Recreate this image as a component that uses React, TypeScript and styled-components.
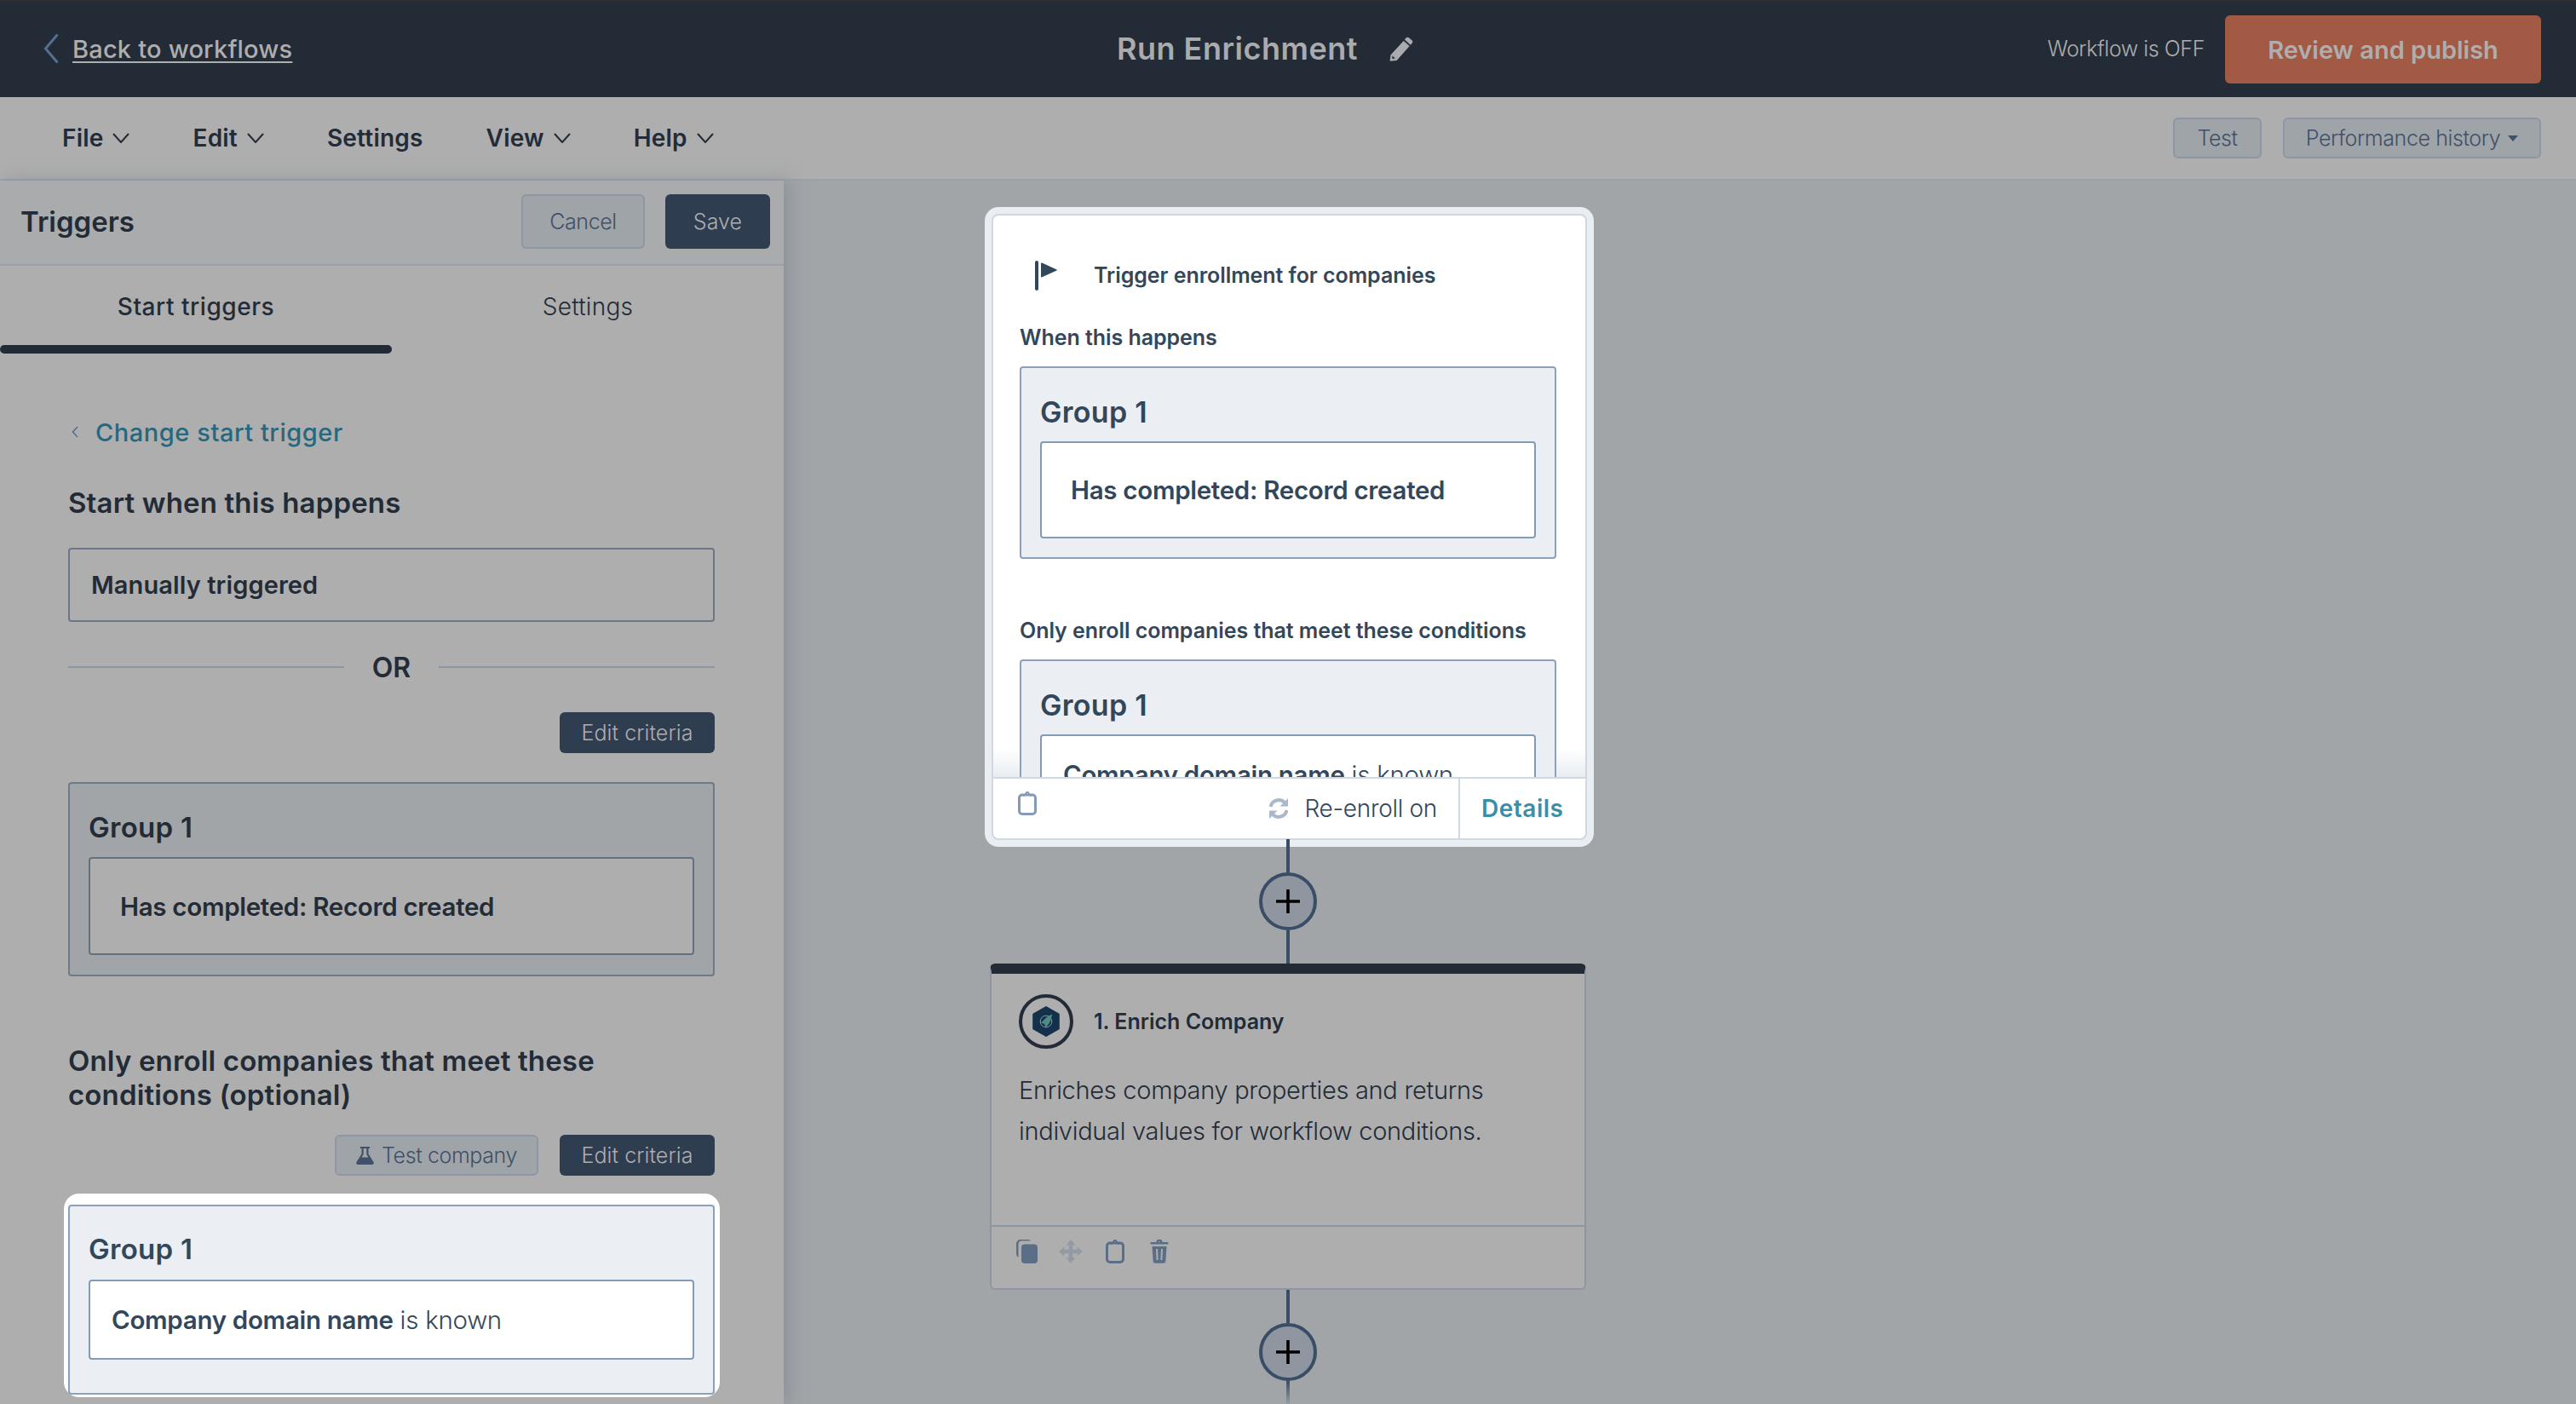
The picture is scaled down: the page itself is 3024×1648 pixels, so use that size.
import React from "react";
import styled, { createGlobalStyle } from "styled-components";

const Global = createGlobalStyle`
  html, body { margin: 0; padding: 0; background: #a1a5a8; }
  body { font-family: "Inter", "Liberation Sans", sans-serif; overflow: hidden; }
  * { box-sizing: border-box; }
`;

const Page = styled.div`
  width: 3024px;
  height: 1648px;
  overflow: hidden;
  display: flex;
  flex-direction: column;
  color: #232b37;
`;

const Header = styled.header`
  height: 114px;
  flex: none;
  background: #232b37;
  border-top: 2px solid #2e2e2e;
  display: flex;
  align-items: center;
  padding: 0 41px 2px 51px;
`;
const BackLink = styled.a`
  width: 1260px;
  display: flex;
  align-items: center;
  gap: 16px;
  font-size: 29px;
  font-weight: 500;
  letter-spacing: 0.2px;
  color: #aeaeae;
  text-decoration: underline;
  text-underline-offset: 4px;
  text-decoration-thickness: 2px;
`;
const TitleWrap = styled.div`
  display: flex;
  align-items: center;
  gap: 37px;
`;
const Title = styled.h1`
  margin: 0;
  font-size: 36px;
  font-weight: 600;
  letter-spacing: 0.5px;
  color: #a9abae;
`;
const HeaderRight = styled.div`
  margin-left: auto;
  display: flex;
  align-items: center;
  gap: 24px;
`;
const Status = styled.span`
  font-size: 25px;
  font-weight: 300;
  letter-spacing: -0.4px;
  color: #aeaeae;
`;
const PublishButton = styled.button`
  width: 371px;
  height: 80px;
  margin-top: 2px;
  border: none;
  border-radius: 6px;
  background: #a35a45;
  color: #aeaeae;
  font: 600 29px "Inter", sans-serif;
  letter-spacing: 0;
`;

const Toolbar = styled.nav`
  height: 98px;
  flex: none;
  background: #aeaeae;
  border-bottom: 2px solid #99a1ab;
  display: flex;
  align-items: center;
  padding: 0 41px 0 73px;
  gap: 74px;
`;
const MenuItem = styled.span`
  display: flex;
  align-items: center;
  gap: 11px;
  font-size: 28px;
  font-weight: 600;
  letter-spacing: 0.2px;
  color: #232b37;
`;
const ToolbarRight = styled.div`
  margin-left: auto;
  display: flex;
  gap: 25px;
`;
const OutlineButton = styled.button<{ $w: number; $h?: number }>`
  width: ${(p) => p.$w}px;
  height: ${(p) => p.$h ?? 48}px;
  display: inline-flex;
  align-items: center;
  justify-content: center;
  gap: 9px;
  padding: 0;
  border: 2px solid #8d96a2;
  border-radius: 6px;
  background: #9fa4a8;
  color: #3f5068;
  font: 300 25px "Inter", sans-serif;
  letter-spacing: -0.4px;
`;
const SolidButton = styled.button<{ $w: number; $h?: number }>`
  width: ${(p) => p.$w}px;
  height: ${(p) => p.$h ?? 48}px;
  padding: 0;
  border: none;
  border-radius: 6px;
  background: #2f3d50;
  color: #aeaeae;
  font: 300 25px "Inter", sans-serif;
  letter-spacing: 0.1px;
`;
const Caret = styled.span`
  width: 0;
  height: 0;
  border-left: 6.5px solid transparent;
  border-right: 6.5px solid transparent;
  border-top: 7px solid #3f5068;
`;

const Body = styled.div`
  flex: 1;
  min-height: 0;
  display: flex;
`;
const Panel = styled.aside`
  width: 920px;
  flex: none;
  background: #aeaeae;
  box-shadow: 6px 0 18px rgba(120, 130, 142, 0.55);
  position: relative;
  z-index: 1;
  overflow: hidden;
`;
const PanelHead = styled.div`
  height: 100px;
  border-bottom: 2px solid #99a1ab;
  background: #a9abad;
  display: flex;
  align-items: center;
  padding: 0 16px 2px 24px;
  gap: 24px;
`;
const PanelTitle = styled.h2`
  margin: 0 auto 0 0;
  font-size: 33px;
  font-weight: 600;
  letter-spacing: 0;
`;
const Tabs = styled.div`
  display: grid;
  grid-template-columns: 460px 460px;
  height: 103px;
`;
const Tab = styled.div<{ $active?: boolean }>`
  position: relative;
  display: flex;
  justify-content: center;
  padding-top: 31px;
  font-size: 28px;
  font-weight: ${(p) => (p.$active ? 500 : 300)};
  letter-spacing: ${(p) => (p.$active ? 0.55 : 0.3)}px;
  color: #232b37;
  &::after {
    content: "";
    display: ${(p) => (p.$active ? "block" : "none")};
    position: absolute;
    left: 0;
    right: 0;
    bottom: 0;
    height: 10px;
    border-radius: 5px;
    background: #232b37;
  }
`;
const PanelBody = styled.div`
  padding: 76px 81px 0 80px;
`;
const ChangeLink = styled.a`
  display: flex;
  align-items: center;
  gap: 20px;
  margin-left: 4px;
  height: 32px;
  font-size: 29px;
  font-weight: 500;
  letter-spacing: 0.55px;
  color: #27687f;
`;
const SectionTitle = styled.h3<{ $top: number }>`
  margin: ${(p) => p.$top}px 0 0;
  font-size: 33px;
  line-height: 40px;
  font-weight: 600;
  letter-spacing: 0.15px;
  color: #232b37;
`;
const TriggerBox = styled.div`
  height: 87px;
  margin-top: 33px;
  display: flex;
  align-items: center;
  padding: 0 25px;
  border: 2px solid #6b7787;
  border-radius: 4px;
  font-size: 29px;
  font-weight: 600;
  letter-spacing: 0.1px;
`;
const OrRow = styled.div`
  display: flex;
  align-items: center;
  gap: 33px;
  margin-top: 33px;
  height: 40px;
  font-size: 32px;
  font-weight: 600;
  &::before, &::after {
    content: "";
    flex: 1;
    height: 2px;
    background: #8d96a2;
  }
`;
const Actions = styled.div<{ $top: number }>`
  display: flex;
  justify-content: flex-end;
  gap: 25px;
  margin-top: ${(p) => p.$top}px;
`;
const Group = styled.div<{ $light?: boolean; $h: number; $top?: number; $titleTop?: number }>`
  height: ${(p) => p.$h}px;
  margin-top: ${(p) => p.$top ?? 0}px;
  padding: ${(p) => p.$titleTop ?? 31}px 22px 0;
  border: 2px solid ${(p) => (p.$light ? "#8ba0ba" : "#6e7a8a")};
  border-radius: 4px;
  background: ${(p) => (p.$light ? "#ebeff3" : "#a1a5a8")};
  color: ${(p) => (p.$light ? "#33475b" : "#232b37")};
`;
const GroupTitle = styled.div<{ $size?: number }>`
  height: 40px;
  line-height: 40px;
  font-size: ${(p) => p.$size ?? 33}px;
  font-weight: 600;
  letter-spacing: 0.3px;
`;
const Condition = styled.div<{ $light?: boolean; $h: number; $top: number; $pad: number; $size?: number }>`
  height: ${(p) => p.$h}px;
  margin-top: ${(p) => p.$top}px;
  display: flex;
  align-items: center;
  padding: 0 ${(p) => p.$pad}px;
  border: 2px solid ${(p) => (p.$light ? "#839ab8" : "#62707f")};
  border-radius: 4px;
  background: ${(p) => (p.$light ? "#ffffff" : "#aeaeae")};
  font-size: ${(p) => p.$size ?? 29.5}px;
  letter-spacing: -0.3px;
  white-space: pre;
  font-weight: 300;
  b { font-weight: 600; }
`;
const Highlight = styled.div`
  margin: 21px -6px 0 -5px;
  padding: 13px 6px 3px 5px;
  background: #ffffff;
  border-radius: 18px;
`;

const Canvas = styled.main`
  flex: 1;
  padding: 31px 0 0 242px;
  background: #a1a5a8;
  overflow: hidden;
`;
const Flow = styled.div`
  width: 700px;
  display: flex;
  flex-direction: column;
  align-items: center;
`;
const ActiveCard = styled.section`
  align-self: stretch;
  margin: 0 -9px 0 -6px;
  height: 751px;
  padding: 8px;
  background: #e9eef2;
  border-radius: 16px;
  flex: none;
`;
const ActiveInner = styled.div`
  height: 100%;
  border: 2px solid #cfd8e3;
  border-radius: 8px;
  background: #ffffff;
  display: flex;
  flex-direction: column;
  overflow: hidden;
`;
const Scroll = styled.div`
  flex: 1;
  min-height: 0;
  position: relative;
  isolation: isolate;
  overflow: hidden;
  padding: 0 34px 0 31px;
  color: #33475b;
  &::before {
    content: "";
    position: absolute;
    z-index: -1;
    left: 0;
    right: 0;
    bottom: 0;
    height: 33px;
    background: linear-gradient(to bottom, rgba(232, 236, 241, 0), rgba(232, 236, 241, 1));
  }
`;
const CardHead = styled.div`
  height: 40px;
  margin-top: 50px;
  display: flex;
  align-items: center;
  gap: 43px;
  margin-left: 18px;
  font-size: 25px;
  font-weight: 600;
  letter-spacing: -0.05px;
`;
const SmallLabel = styled.div<{ $top: number }>`
  margin-top: ${(p) => p.$top}px;
  height: 30px;
  line-height: 30px;
  font-size: 25px;
  font-weight: 600;
  letter-spacing: -0.05px;
`;
const Footer = styled.div`
  height: 72px;
  flex: none;
  border-top: 2px solid #cfd8e3;
  display: flex;
  align-items: center;
  padding-left: 29px;
  font-size: 28px;
  font-weight: 300;
  letter-spacing: -0.3px;
  color: #33475b;
`;
const FooterClip = styled.div`
  display: flex;
  margin-bottom: 12px;
`;
const FooterSpacer = styled.div`
  flex: 1;
`;
const Reenroll = styled.div`
  display: flex;
  align-items: center;
  gap: 17px;
  padding-right: 25px;
`;
const DetailsLink = styled.a`
  align-self: stretch;
  width: 149px;
  display: flex;
  align-items: center;
  padding-left: 25px;
  border-left: 2px solid #cfd8e3;
  color: #3b8ea8;
  font-weight: 600;
  letter-spacing: 0.5px;
`;
const Wire = styled.div<{ $h: number; $fade?: boolean; $over?: boolean }>`
  width: 4px;
  height: ${(p) => p.$h}px;
  flex: none;
  position: relative;
  margin-top: ${(p) => (p.$over ? -9 : 0)}px;
  background: ${(p) => (p.$fade ? "linear-gradient(to bottom, #3a4d66, #a1a5a8)" : "#3a4d66")};
`;
const AddButton = styled.div`
  width: 68px;
  height: 68px;
  flex: none;
  border-radius: 50%;
  border: 4px solid #3a4d66;
  background: #8f969f;
  display: flex;
  align-items: center;
  justify-content: center;
`;
const ActionCard = styled.section`
  align-self: stretch;
  height: 383px;
  flex: none;
  border: 2px solid #8d96a2;
  border-top: 12px solid #232b37;
  border-radius: 6px;
  background: #aeaeae;
  display: flex;
  flex-direction: column;
  color: #232b37;
`;
const ActionHead = styled.div`
  margin: 24px 0 0 32px;
  height: 64px;
  display: flex;
  align-items: center;
  gap: 24px;
  font-size: 25px;
  font-weight: 600;
  letter-spacing: 0;
`;
const ActionIcon = styled.div`
  width: 64px;
  height: 64px;
  border: 4px solid #232b37;
  border-radius: 50%;
  display: flex;
  align-items: center;
  justify-content: center;
`;
const Description = styled.p`
  margin: 25px 0 0 32px;
  width: 640px;
  font-size: 29px;
  line-height: 48px;
  font-weight: 300;
  letter-spacing: -0.3px;
`;
const ActionTools = styled.div`
  margin-top: auto;
  height: 74px;
  border-top: 2px solid #8d96a2;
  display: flex;
  align-items: flex-start;
  padding: 15px 0 0 15px;
`;
const ToolSlot = styled.div`
  width: 52px;
  display: flex;
  justify-content: center;
`;

const Chevron = () => (
  <svg width="20" height="12" viewBox="0 0 20 12" fill="none">
    <path d="M1 1l9 10 9-10" stroke="#232b37" strokeWidth="2" />
  </svg>
);
const BackChevron = () => (
  <svg width="18" height="36" viewBox="0 0 18 36" fill="none">
    <path d="M16.5 1.5L2.5 18l14 16.5" stroke="#55708f" strokeWidth="3" />
  </svg>
);
const Pencil = () => (
  <svg width="28" height="29" viewBox="0 0 28 29" fill="#a9abae">
    <path d="M19.6 1.6a2.6 2.6 0 0 1 3.6-.2l3.2 2.8a2.6 2.6 0 0 1 .2 3.6l-1.7 1.9-7-6.2z" />
    <path fillRule="evenodd" d="M16.7 4.9l7 6.2L8.6 28l-8 .8.9-7.2zM3.6 22.6l-.4 3.4 3.8-.5z" />
  </svg>
);
const Flag = () => (
  <svg width="26" height="35" viewBox="0 0 26 35" fill="#33475b" style={{ flex: "none" }}>
    <rect width="4" height="35" rx="2" />
    <path d="M7 3.5a1 1 0 0 1 1.300-.9L25.500 10.500a.6.6 0 0 1 0 1L8.300 19.300A1 1 0 0 1 7 18.400z" />
  </svg>
);
const Clipboard = ({ c }: { c: string }) => (
  <svg width="22" height="28" viewBox="0 0 22 28" fill="none" style={{ flex: "none" }}>
    <rect x="1.500" y="4" width="19" height="22.500" rx="3.500" stroke={c} strokeWidth="3" />
    <path d="M6 5c2-.5 3-1 3.500-3a1.600 1.600 0 0 1 3 0c.5 2 1.500 2.500 3.500 3" stroke={c} strokeWidth="2" />
  </svg>
);
const Refresh = () => (
  <svg width="26" height="26" viewBox="0 0 26 26" fill="none" style={{ flex: "none" }}>
    <path d="M3.500 11a9.800 9.800 0 0 1 17-4.500" stroke="#a9b9cc" strokeWidth="4" />
    <path d="M22.500 15a9.800 9.800 0 0 1-17 4.500" stroke="#a9b9cc" strokeWidth="4" />
    <path d="M24 1v9.500h-9.500zM2 25v-9.500h9.500z" fill="#a9b9cc" />
  </svg>
);
const Plus = () => (
  <svg width="28" height="28" viewBox="0 0 28 28">
    <path d="M14 0v28M0 14h28" stroke="#000" strokeWidth="3.600" />
  </svg>
);
const Flask = () => (
  <svg width="21" height="21" viewBox="0 0 21 21" fill="#3f5068">
    <path d="M5 0h11v2h-1.500v6.500L20.500 18a2 2 0 0 1-1.700 3H2.200a2 2 0 0 1-1.700-3L6.500 8.500V2H5zM8.700 2v7.100L6.500 12.500h8L12.300 9.100V2z" />
  </svg>
);
const SmallBack = () => (
  <svg width="8" height="14" viewBox="0 0 8 14" fill="none">
    <path d="M7 1L1.500 7 7 13" stroke="#55708f" strokeWidth="1.600" />
  </svg>
);
const EnrichLogo = () => (
  <svg width="32" height="36" viewBox="0 0 32 36">
    <path d="M16 0l15 8.500a1.500 1.500 0 0 1 .8 1.300v16.400a1.500 1.500 0 0 1-.8 1.300L16 36 1 27.500a1.500 1.500 0 0 1-.8-1.300V9.800A1.500 1.500 0 0 1 1 8.500z" fill="#15304a" />
    <circle cx="16" cy="18" r="6.800" fill="none" stroke="#8a9aa6" strokeWidth="1" />
    <path d="M23 9.500c-.5 5.500-2.500 11-7.500 15.500l-1.500-4-4-1.500c4-4 8.500-8.500 13-10z" fill="#4e8b84" />
  </svg>
);
const CopyIcon = () => (
  <svg width="25" height="28" viewBox="0 0 25 28" fill="#5a6e87">
    <path d="M5 0h9a5 5 0 0 1 3.500 1.500H6A4 4 0 0 0 2.500 5.500V21A5 5 0 0 1 0 17V5a5 5 0 0 1 5-5z" />
    <rect x="6" y="5.500" width="19" height="22.500" rx="4" />
  </svg>
);
const MoveIcon = () => (
  <svg width="28" height="28" viewBox="0 0 28 28" fill="#939aa3">
    <path d="M14 0l5.500 6.500h-3.200v5.200h5.200V8.500L28 14l-6.500 5.500v-3.200h-5.200v5.200h3.200L14 28l-5.500-6.500h3.200v-5.200H6.500v3.200L0 14l6.500-5.500v3.200h5.200V6.500H8.500z" />
  </svg>
);
const TrashIcon = () => (
  <svg width="22" height="28" viewBox="0 0 22 28" fill="#5a6e87">
    <path d="M7.500 3a3.500 3.500 0 0 1 7 0h6a1 1 0 0 1 1 1v1.500H.5V4a1 1 0 0 1 1-1zM10 3h2a1 1 0 0 0-2 0z" />
    <path fillRule="evenodd" d="M2.500 8h17l-1.200 17.500a2.500 2.500 0 0 1-2.500 2.300H6.200a2.500 2.500 0 0 1-2.500-2.300zM7 11l.6 13h2L9 11zm6 0l-.6 13h2L15 11z" />
  </svg>
);

const menu: { label: string; arrow: boolean }[] = [
  { label: "File", arrow: true },
  { label: "Edit", arrow: true },
  { label: "Settings", arrow: false },
  { label: "View", arrow: true },
  { label: "Help", arrow: true },
];

export default function App() {
  return (
    <Page>
      <Global />
      <Header>
        <BackLink>
          <BackChevron />
          Back to workflows
        </BackLink>
        <TitleWrap>
          <Title>Run Enrichment</Title>
          <Pencil />
        </TitleWrap>
        <HeaderRight>
          <Status>Workflow is OFF</Status>
          <PublishButton>Review and publish</PublishButton>
        </HeaderRight>
      </Header>
      <Toolbar>
        {menu.map((m) => (
          <MenuItem key={m.label}>
            {m.label}
            {m.arrow && <Chevron />}
          </MenuItem>
        ))}
        <ToolbarRight>
          <OutlineButton $w={104}>Test</OutlineButton>
          <OutlineButton $w={303}>
            Performance history
            <Caret />
          </OutlineButton>
        </ToolbarRight>
      </Toolbar>
      <Body>
        <Panel>
          <PanelHead>
            <PanelTitle>Triggers</PanelTitle>
            <OutlineButton $w={145} $h={64}>Cancel</OutlineButton>
            <SolidButton $w={123} $h={64}>Save</SolidButton>
          </PanelHead>
          <Tabs>
            <Tab $active>Start triggers</Tab>
            <Tab>Settings</Tab>
          </Tabs>
          <PanelBody>
            <ChangeLink>
              <SmallBack />
              Change start trigger
            </ChangeLink>
            <SectionTitle $top={47}>Start when this happens</SectionTitle>
            <TriggerBox>Manually triggered</TriggerBox>
            <OrRow>OR</OrRow>
            <Actions $top={33}>
              <SolidButton $w={182}>Edit criteria</SolidButton>
            </Actions>
            <Group $h={228} $top={34}>
              <GroupTitle>Group 1</GroupTitle>
              <Condition $h={115} $top={15} $pad={35}>
                <b>Has completed: Record created</b>
              </Condition>
            </Group>
            <SectionTitle $top={79}>
              Only enroll companies that meet these conditions (optional)
            </SectionTitle>
            <Actions $top={27}>
              <OutlineButton $w={239}>
                <Flask />
                Test company
              </OutlineButton>
              <SolidButton $w={182}>Edit criteria</SolidButton>
            </Actions>
            <Highlight>
              <Group $light $h={223} $titleTop={30}>
                <GroupTitle>Group 1</GroupTitle>
                <Condition $light $h={94} $top={16} $pad={25}>
                  <b>Company domain name</b> is known
                </Condition>
              </Group>
            </Highlight>
          </PanelBody>
        </Panel>
        <Canvas>
          <Flow>
            <ActiveCard>
              <ActiveInner>
                <Scroll>
                  <CardHead>
                    <Flag />
                    Trigger enrollment for companies
                  </CardHead>
                  <SmallLabel $top={38}>When this happens</SmallLabel>
                  <Group $light $h={226} $top={19} $titleTop={32}>
                    <GroupTitle $size={34}>Group 1</GroupTitle>
                    <Condition $light $h={114} $top={14} $pad={34}>
                      <b>Has completed: Record created</b>
                    </Condition>
                  </Group>
                  <SmallLabel $top={69}>Only enroll companies that meet these conditions</SmallLabel>
                  <Group $light $h={226} $top={19} $titleTop={32}>
                    <GroupTitle $size={34}>Group 1</GroupTitle>
                    <Condition $light $h={94} $top={14} $pad={25}>
                      <b>Company domain name</b> is known
                    </Condition>
                  </Group>
                </Scroll>
                <Footer>
                  <FooterClip>
                    <Clipboard c="#839ab8" />
                  </FooterClip>
                  <FooterSpacer />
                  <Reenroll>
                    <Refresh />
                    Re-enroll on
                  </Reenroll>
                  <DetailsLink>Details</DetailsLink>
                </Footer>
              </ActiveInner>
            </ActiveCard>
            <Wire $h={39} $over />
            <AddButton><Plus /></AddButton>
            <Wire $h={39} />
            <ActionCard>
              <ActionHead>
                <ActionIcon><EnrichLogo /></ActionIcon>
                1. Enrich Company
              </ActionHead>
              <Description>
                Enriches company properties and returns individual values for workflow conditions.
              </Description>
              <ActionTools>
                <ToolSlot><CopyIcon /></ToolSlot>
                <ToolSlot><MoveIcon /></ToolSlot>
                <ToolSlot><Clipboard c="#5a6e87" /></ToolSlot>
                <ToolSlot><TrashIcon /></ToolSlot>
              </ActionTools>
            </ActionCard>
            <Wire $h={39} />
            <AddButton><Plus /></AddButton>
            <Wire $h={30} $fade />
          </Flow>
        </Canvas>
      </Body>
    </Page>
  );
}
